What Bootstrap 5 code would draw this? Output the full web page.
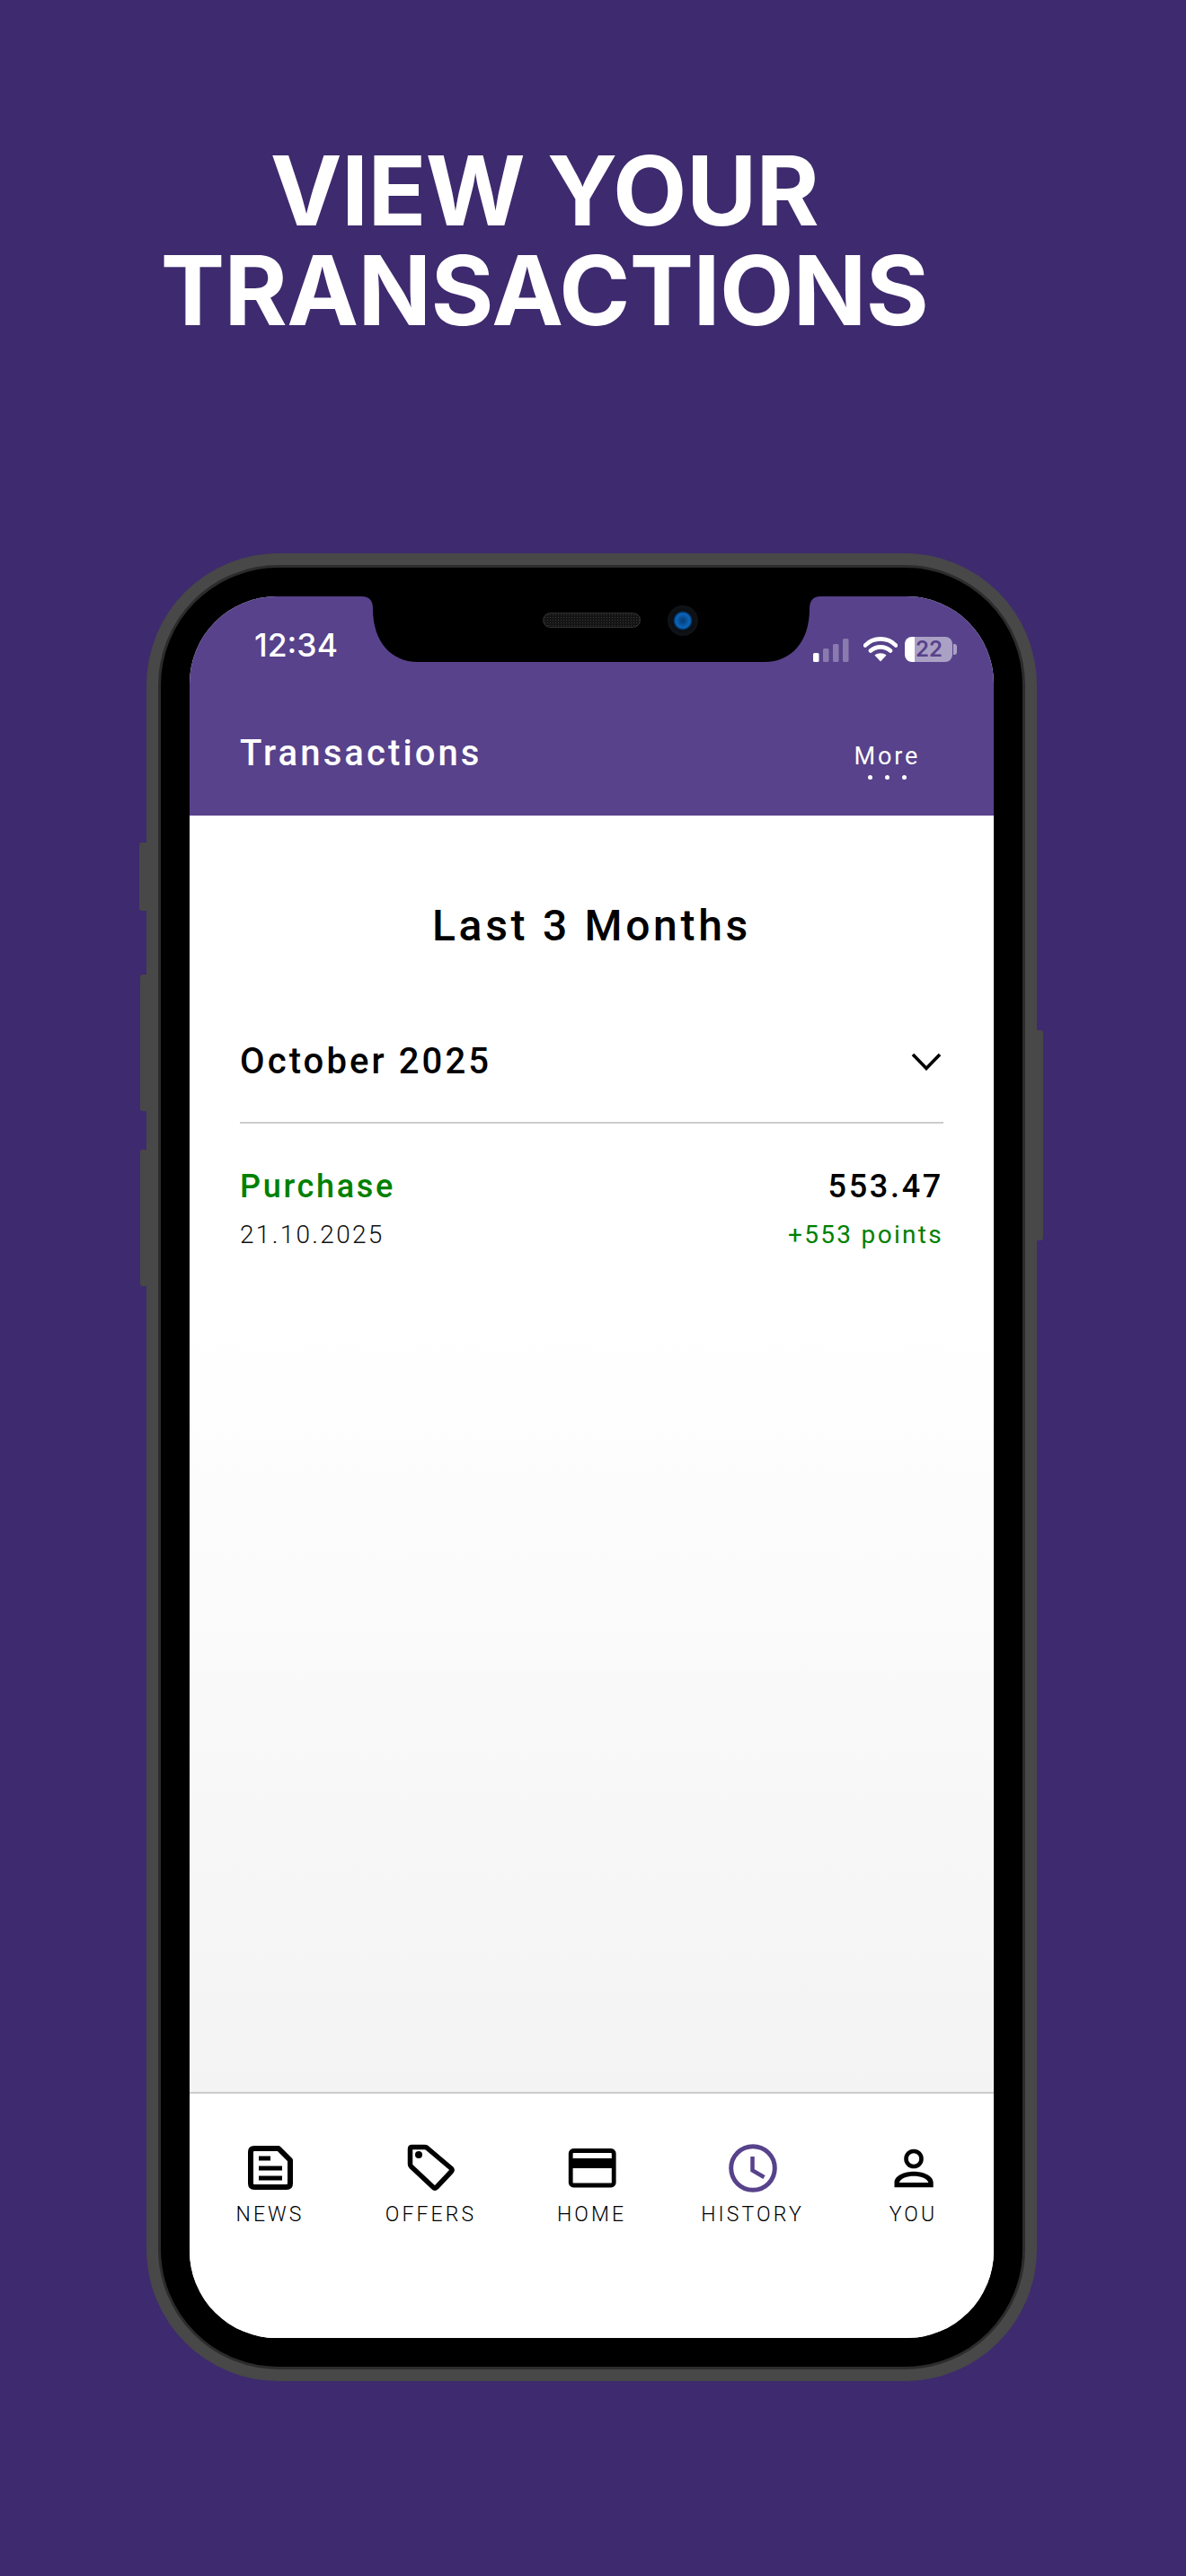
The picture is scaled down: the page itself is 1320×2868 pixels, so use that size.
<!DOCTYPE html>
<html lang="en">
  <head>
    <meta charset="utf-8">
    <meta name="viewport" content="width=device-width, initial-scale=1">
    <title>View your transactions</title>
    <link href="https://cdn.jsdelivr.net/npm/bootstrap@5.3.3/dist/css/bootstrap.min.css" rel="stylesheet">
    <style>
      body {
        background: #3e2a6e;
        font-family: Roboto, sans-serif;
        color: #000;
      }
      .promo-title {
        width: 1212px;
        padding-top: 157px;
        margin: 0;
        font-family: Inter, sans-serif;
        font-weight: 700;
        font-size: 107px;
        line-height: 110.5px;
        letter-spacing: -0.6px;
        color: #fff;
        text-align: center;
      }
      .phone-frame {
        width: 991px;
        height: 2035px;
        margin: 238px 0 0 163px;
        padding: 13px;
        background: #484848;
        border-radius: 147px;
      }
      .phone-key {
        width: 12px;
        background: #484848;
        border-radius: 3px;
      }
      .key-mute { left: -8px; top: 322px; height: 76px; }
      .key-up { left: -7px; top: 469px; height: 152px; }
      .key-down { left: -7px; top: 664px; height: 152px; }
      .key-power { right: -7px; top: 531px; height: 234px; }
      .phone-bezel {
        height: 100%;
        padding: 32px;
        background: #000;
        border: 3px solid #2c2c2c;
        border-radius: 134px;
      }
      .phone-screen {
        height: 100%;
        background: #fff;
        border-radius: 97px;
        overflow: hidden;
      }
      .notch-box {
        top: 0;
        left: 192px;
        width: 510px;
        height: 73px;
        padding: 17px 0 0 201px;
        gap: 30px;
      }
      .notch-shape { inset: 0; }
      .notch-speaker {
        width: 109px;
        height: 17px;
        margin-top: 1px;
        background: radial-gradient(#3a3a3a 0.6px, #141414 1px) 0 0 / 3px 3px;
        border: 1px solid #333;
        border-radius: 9px;
      }
      .notch-camera {
        width: 34px;
        height: 34px;
        margin-top: -7px;
        background: radial-gradient(circle, #063a70 0, #0b66bd 8px, #042a52 10px, #0b0e12 11px, #101317 17px);
        border-radius: 50%;
      }
      .app-header {
        height: 244px;
        background: #57428b;
        color: #fff;
      }
      .status-row {
        height: 73px;
        padding: 0 41px 0 72px;
      }
      .status-time {
        font-family: Inter, sans-serif;
        font-weight: 500;
        font-size: 35.5px;
        line-height: 34px;
        margin-bottom: 1px;
      }
      .battery-pill {
        width: 53px;
        height: 28px;
        background: linear-gradient(90deg, #fff 11px, rgba(255, 255, 255, .5) 11px);
        border-radius: 8px;
        font-family: Inter, sans-serif;
        font-weight: 600;
        font-size: 24px;
        line-height: 28px;
        color: #57428b;
        padding-left: 12px;
      }
      .battery-nub {
        width: 4px;
        height: 12px;
        margin: 0 0 8px 1px;
        background: rgba(255, 255, 255, .5);
        border-radius: 0 3px 3px 0;
      }
      .title-row {
        padding: 77px 82px 0 56px;
      }
      .header-title {
        font-weight: 500;
        font-size: 40px;
        line-height: 50px;
        letter-spacing: 3.1px;
      }
      .header-more {
        font-size: 27px;
        line-height: 32px;
        letter-spacing: 2.8px;
        margin-top: 12px;
      }
      .more-dots { gap: 14px; margin-top: 5px; }
      .more-dots span {
        width: 5px;
        height: 5px;
        background: #fff;
        border-radius: 50%;
      }
      .history-body {
        padding: 93px 56px 0;
        background: linear-gradient(#fff 40%, #f3f3f3 100%);
      }
      .range-title {
        font-weight: 500;
        font-size: 48px;
        line-height: 60px;
        letter-spacing: 3.7px;
        text-align: center;
      }
      .month-row {
        margin-top: 96px;
        padding-bottom: 42px;
        border-bottom: 2px solid #ccc;
      }
      .month-name {
        font-weight: 500;
        font-size: 40px;
        line-height: 50px;
        letter-spacing: 3.1px;
      }
      .month-chevron { margin-right: 2px; }
      .tx-row { margin-top: 48px; }
      .tx-main {
        font-weight: 500;
        font-size: 36px;
        line-height: 44px;
        letter-spacing: 2.7px;
      }
      .tx-sub {
        font-size: 28px;
        line-height: 34px;
        margin-top: 15px;
      }
      .tx-date { font-weight: 300; letter-spacing: 2.3px; color: #111; }
      .tx-green { color: #008000; }
      .tx-sub.tx-green { letter-spacing: 2.3px; }
      .tab-bar {
        height: 274px;
        padding-top: 56px;
        background: #fff;
        border-top: 2px solid #ccc;
      }
      .tab-item {
        width: 180px;
        font-size: 23px;
        font-weight: 300;
        line-height: 30px;
        letter-spacing: 3.1px;
        color: #000;
      }
      .tab-item svg { margin-bottom: 10px; }
      .tab-ink { stroke: #000; fill: none; }
      .tab-active { stroke: #57428b; fill: none; }
    </style>
  </head>
  <body>
    <h1 class="promo-title">VIEW YOUR<br>TRANSACTIONS</h1>

    <div class="phone-frame position-relative">
      <div class="phone-key key-mute position-absolute"></div>
      <div class="phone-key key-up position-absolute"></div>
      <div class="phone-key key-down position-absolute"></div>
      <div class="phone-key key-power position-absolute"></div>

      <div class="phone-bezel position-relative">
        <div class="phone-screen d-flex flex-column position-relative">

          <!-- header -->
          <div class="app-header flex-shrink-0">
            <div class="status-row d-flex justify-content-between align-items-end">
              <div class="status-time">12:34</div>
              <div class="d-flex align-items-end">
                <svg width="40" height="26" viewBox="0 0 40 26" class="me-3">
                  <rect x="0" y="16" width="6.5" height="10" rx="1.5" fill="#fff"/>
                  <rect x="11" y="11" width="6.5" height="15" rx="1.5" fill="#fff" opacity=".3"/>
                  <rect x="22" y="6" width="6.5" height="20" rx="1.5" fill="#fff" opacity=".3"/>
                  <rect x="33" y="0" width="6.5" height="26" rx="1.5" fill="#fff" opacity=".3"/>
                </svg>
                <svg width="38" height="28" viewBox="0 0 38 28" class="me-2">
                  <path d="M2 9.5C11 0 27 0 36 9.5M8 15.5C14 10 24 10 30 15.5" fill="none" stroke="#fff" stroke-width="4.6" stroke-linecap="round"/>
                  <path d="M12.5 20.5C16 17.5 22 17.5 25.5 20.5L19 27.5Z" fill="#fff"/>
                </svg>
                <div class="battery-pill">22</div>
                <div class="battery-nub"></div>
              </div>
            </div>
            <div class="title-row d-flex justify-content-between align-items-start">
              <div class="header-title">Transactions</div>
              <div class="d-flex flex-column align-items-center">
                <div class="header-more">More</div>
                <div class="more-dots d-flex"><span></span><span></span><span></span></div>
              </div>
            </div>
          </div>

          <!-- list -->
          <div class="history-body flex-grow-1">
            <div class="range-title">Last 3 Months</div>
            <div class="month-row d-flex justify-content-between align-items-center">
              <div class="month-name">October 2025</div>
              <svg class="month-chevron" width="34" height="20" viewBox="0 0 34 20">
                <path d="M2 2L17 17.5L32 2" fill="none" stroke="#000" stroke-width="3.6"/>
              </svg>
            </div>
            <div class="tx-row d-flex justify-content-between">
              <div>
                <div class="tx-main tx-green">Purchase</div>
                <div class="tx-sub tx-date">21.10.2025</div>
              </div>
              <div class="text-end">
                <div class="tx-main">553.47</div>
                <div class="tx-sub tx-green">+553 points</div>
              </div>
            </div>
          </div>

          <!-- tabs -->
          <div class="tab-bar d-flex justify-content-center flex-shrink-0">
            <div class="tab-item text-center">
              <svg class="d-block mx-auto" width="54" height="54" viewBox="0 0 54 54">
                <path class="tab-ink" d="M9 5H36L49 18V44Q49 48 45 48H9Q5 48 5 44V9Q5 5 9 5Z" stroke-width="6" stroke-linejoin="round"/>
                <path class="tab-ink" d="M14 16H27M14 27H40M14 38H40" stroke-width="5"/>
              </svg>
              NEWS
            </div>
            <div class="tab-item text-center">
              <svg class="d-block mx-auto" width="54" height="54" viewBox="0 0 54 54">
                <path class="tab-ink" d="M3.5 5.5Q3.5 3.5 5.5 3.5H20Q21.5 3.5 23 5L49 27Q51 29 49 31L33 48Q31 50 29 48L5 25.5Q3.5 24 3.5 22.5Z" stroke-width="5.5" stroke-linejoin="round"/>
                <circle cx="13" cy="12" r="4" fill="#000"/>
              </svg>
              OFFERS
            </div>
            <div class="tab-item text-center">
              <svg class="d-block mx-auto" width="54" height="54" viewBox="0 0 54 54">
                <rect class="tab-ink" x="3.2" y="7.5" width="48" height="38.5" rx="3" stroke-width="4.8"/>
                <rect x="3" y="16" width="48" height="11" fill="#000"/>
              </svg>
              HOME
            </div>
            <div class="tab-item text-center">
              <svg class="d-block mx-auto" width="54" height="54" viewBox="0 0 54 54">
                <circle class="tab-active" cx="27" cy="27" r="24.3" stroke-width="5"/>
                <path class="tab-active" d="M26.5 14V29.5L39.5 37" stroke-width="4.5"/>
              </svg>
              HISTORY
            </div>
            <div class="tab-item text-center">
              <svg class="d-block mx-auto" width="54" height="54" viewBox="0 0 54 54">
                <circle class="tab-ink" cx="27" cy="16.5" r="8.5" stroke-width="4.6"/>
                <path d="M5.5 48.3V43C5.5 35 16.5 30.7 27 30.7S48.7 35 48.7 43V48.3ZM10.8 43H43.4C41.5 38 34.5 35.7 27 35.7S12.7 38 10.8 43Z" fill="#000" fill-rule="evenodd"/>
              </svg>
              YOU
            </div>
          </div>

          <!-- notch over the header -->
          <div class="notch-box d-flex position-absolute">
            <svg class="notch-shape position-absolute" width="510" height="73" viewBox="0 0 510 73">
              <path d="M0 0H510Q498 0 498 14C498 50 478 73 448 73H62C32 73 12 50 12 14Q12 0 0 0Z" fill="#000"/>
            </svg>
            <div class="notch-speaker position-relative"></div>
            <div class="notch-camera position-relative"></div>
          </div>

        </div>
      </div>
    </div>

    <script src="https://cdn.jsdelivr.net/npm/bootstrap@5.3.3/dist/js/bootstrap.bundle.min.js"></script>
  </body>
</html>
